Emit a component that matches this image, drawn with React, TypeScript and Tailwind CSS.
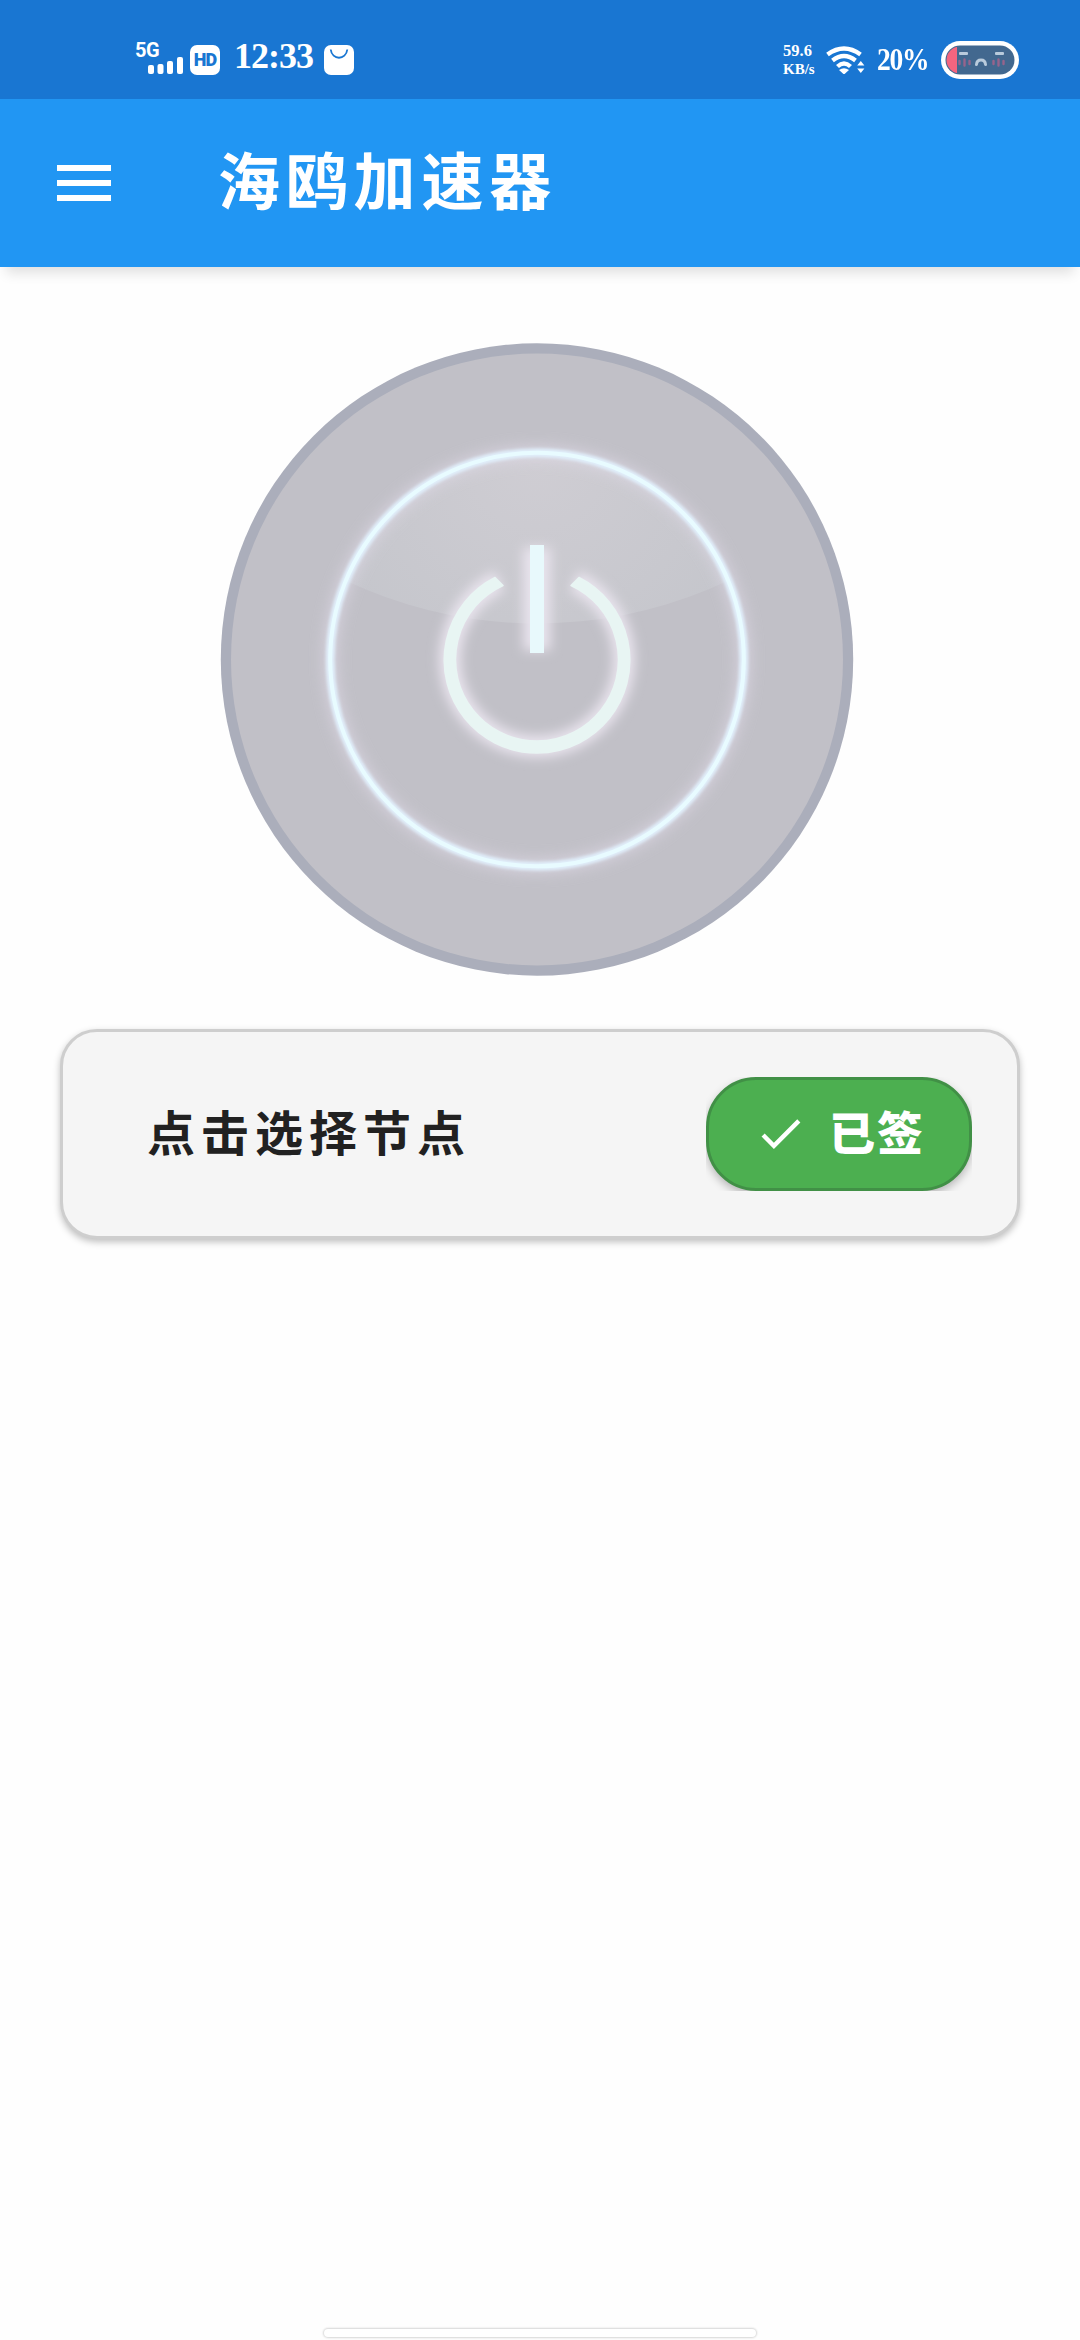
import React from "react";

function SignalIcon() {
  return (
    <svg viewBox="0 0 36 17" className="ml-3 h-[17px] w-[36px]" fill="#fff">
      <rect x="0" y="8" width="6" height="9" rx="2" />
      <rect x="9.5" y="7" width="6" height="10" rx="2" />
      <rect x="19" y="4" width="6" height="13" rx="2" />
      <rect x="29" y="0" width="6" height="17" rx="2" />
    </svg>
  );
}

function BagIcon() {
  return (
    <svg viewBox="0 0 30 30" className="h-[30px] w-[30px]">
      <rect width="30" height="30" rx="7" fill="#fff" />
      <path
        d="M6.7 4.5C8 15.5 22 15.5 23.3 4.5"
        fill="none"
        stroke="#1976d2"
        strokeWidth="1.8"
      />
    </svg>
  );
}

function WifiIcon() {
  return (
    <svg viewBox="0 0 40 28" className="h-[28px] w-[40px]" fill="none">
      <g stroke="#fff" strokeWidth="4.4">
        <path d="M1.5 8.5Q18 -3.5 34.5 8.5" />
        <path d="M6.5 14.5Q18 5.5 29.5 14.5" />
        <path d="M11.5 20.5Q18 14.5 24.5 20.5" />
      </g>
      <path d="M13 24Q18 20.3 23 24L18 28.5Z" fill="#fff" />
      <path d="M31.2 19.5 34.8 15 38.4 19.5ZM31.2 22.5 34.8 27 38.4 22.5Z" fill="#fff" />
    </svg>
  );
}

function BatteryIcon() {
  return (
    <svg viewBox="0 0 78 38" className="h-[38px] w-[78px]">
      <clipPath id="battery">
        <rect x="5.5" y="5.5" width="67" height="27" rx="13.5" />
      </clipPath>
      <rect width="78" height="38" rx="19" fill="#fff" />
      <rect x="4.5" y="4.5" width="69" height="29" rx="14.5" fill="#42688f" />
      <rect x="5" y="5" width="11" height="28" fill="#f4657f" clipPath="url(#battery)" />
      <g fill="#b9cbdc">
        <rect x="18" y="11" width="9" height="3" rx="1" />
        <rect x="54" y="11" width="9" height="3" rx="1" />
      </g>
      <path
        d="M35.5 23.5C36 17.5 44 17.5 44.5 23.5"
        fill="none"
        stroke="#b9cbdc"
        strokeWidth="3"
        strokeLinecap="round"
      />
      <g stroke="#96648c" strokeWidth="2.4" strokeLinecap="round">
        <path d="M18.500 20v3M23.500 18.5v6M28.500 20v3" />
        <path d="M52.500 20v3M57.500 18.5v6M62.500 20v3" />
      </g>
    </svg>
  );
}

function StatusBar() {
  return (
    <div className="flex h-[99px] items-start bg-[#1976d2] pr-[61px] pl-[136px] font-['Liberation_Serif',serif] font-bold text-white">
      <div className="mt-[41px] w-[54px]">
        <p className="-ml-px h-4 font-['Roboto',sans-serif] text-[20px] leading-[19px] font-bold tracking-[-0.5px]">
          5G
        </p>
        <SignalIcon />
      </div>
      <div className="mt-[45px] flex h-[30px] w-[30px] items-center justify-center rounded-[7px] bg-white font-['Roboto',sans-serif] text-[18px] leading-none font-black tracking-[-1px] text-[#1976d2]">
        HD
      </div>
      <p className="mt-[37px] ml-[14px] w-[90px] text-[36px] leading-[38px] tracking-[-1px]">
        12:33
      </p>
      <div className="mt-[45px]">
        <BagIcon />
      </div>
      <div className="mt-[41px] ml-auto w-[43px] text-[16.5px] leading-[19px]">
        <p>59.6</p>
        <p className="text-[15px]">KB/s</p>
      </div>
      <div className="mt-[46px]">
        <WifiIcon />
      </div>
      <p className="mt-[40px] ml-[11px] w-[64px] origin-left scale-x-[0.86] text-[32px] leading-[38px] tracking-[-1.5px]">
        20%
      </p>
      <div className="mt-[41px]">
        <BatteryIcon />
      </div>
    </div>
  );
}

function AppBar() {
  return (
    <header className="flex h-[168px] items-center bg-[#2196f3] pl-[57px] text-white shadow-[0_12px_12px_-6px_rgba(0,0,0,0.12)]">
      <button className="flex w-[54px] flex-col gap-[9px]" aria-label="menu">
        <span className="h-[6px] bg-white" />
        <span className="h-[6px] bg-white" />
        <span className="h-[6px] bg-white" />
      </button>
      <h1 className="-mt-2.5 ml-[107px] text-[62px] leading-none font-bold tracking-[5.8px]">
        海鸥加速器
      </h1>
    </header>
  );
}

function PowerButton() {
  return (
    <svg viewBox="-317 -316.5 634 633" className="mt-[76px] ml-[220px] h-[633px] w-[634px]">
      <defs>
        <radialGradient id="gloss" gradientUnits="userSpaceOnUse" cx="0" cy="-200" r="230">
          <stop offset="0" stopColor="#cfcdd3" />
          <stop offset="1" stopColor="#c5c6cc" />
        </radialGradient>
        <clipPath id="disc">
          <circle r="208" />
        </clipPath>
        <filter id="soft" x="-30%" y="-30%" width="160%" height="160%">
          <feGaussianBlur stdDeviation="7" />
        </filter>
        <filter id="halo" filterUnits="userSpaceOnUse" x="-150" y="-150" width="300" height="300">
          <feGaussianBlur stdDeviation="6" />
        </filter>
        <filter id="edge" x="-30%" y="-30%" width="160%" height="160%">
          <feGaussianBlur stdDeviation="1.6" />
        </filter>
      </defs>
      <circle r="316.2" fill="#abaebb" />
      <circle r="306" fill="#c1c0c7" />
      <circle cy="-483" r="447" fill="url(#gloss)" clipPath="url(#disc)" />

      <circle r="206.8" fill="none" stroke="#e2dcea" strokeWidth="14" opacity="0.6" filter="url(#soft)" />
      <circle r="206.8" fill="none" stroke="#e0eefa" strokeWidth="9" filter="url(#edge)" />
      <circle r="206.8" fill="none" stroke="#e8fbff" strokeWidth="4" />

      <g fill="none" stroke="#e9e4ee" strokeWidth="22" filter="url(#halo)">
        <path d="M-37.5-78.5A87 87 0 1 0 37.5-78.5" />
        <path d="M0-112V-9" strokeWidth="27" />
      </g>
      <path
        d="M-42-82-34-74A81.5 81.5 0 1 0 34-74L42-82A92.8 92.8 0 1 1-42-82Z"
        fill="#e8f5f3"
        stroke="#e8f5f3"
        strokeWidth="1.5"
        strokeLinejoin="round"
      />
      <rect x="-7" y="-114.5" width="14" height="108" fill="#e8f9fc" />
    </svg>
  );
}

function NodeCard() {
  return (
    <section className="mx-[60px] mt-[53px] flex h-[210px] items-center justify-between rounded-[37px] border-[3px] border-[#cecece] bg-[#f5f5f5] pr-[45px] pl-[84px] shadow-[0_3px_7px_rgba(0,0,0,0.25)]">
      <p className="-mt-[9px] text-[48px] leading-none font-bold tracking-[6px] text-[#212121]">
        点击选择节点
      </p>
      <div className="-mt-px h-[114px] w-[266px] overflow-hidden">
        <button className="flex h-full w-full items-center rounded-[50px] border-[3px] border-[#419046] bg-[#4caf50] pl-[45px] text-white shadow-[0_4px_8px_rgba(0,0,0,0.25)]">
          <svg viewBox="0 0 24 24" className="h-[53px] w-[53px]" fill="#fff">
            <path d="M9 16.17 4.83 12l-1.42 1.41L9 19 21 7l-1.41-1.41z" />
          </svg>
          <span className="-mt-[7px] ml-[22px] text-[46px] leading-none font-black tracking-[2px]">
            已签
          </span>
        </button>
      </div>
    </section>
  );
}

export default function App() {
  return (
    <main className="flex h-[2340px] w-[1080px] flex-col overflow-hidden bg-[#fefefe] font-['Noto_Sans_CJK_SC',sans-serif]">
      <StatusBar />
      <AppBar />
      <PowerButton />
      <NodeCard />
      <div className="mx-auto mt-auto mb-[3px] h-[8px] w-[432px] rounded-full bg-white shadow-[0_0_2px_1px_rgba(0,0,0,0.16)]" />
    </main>
  );
}
